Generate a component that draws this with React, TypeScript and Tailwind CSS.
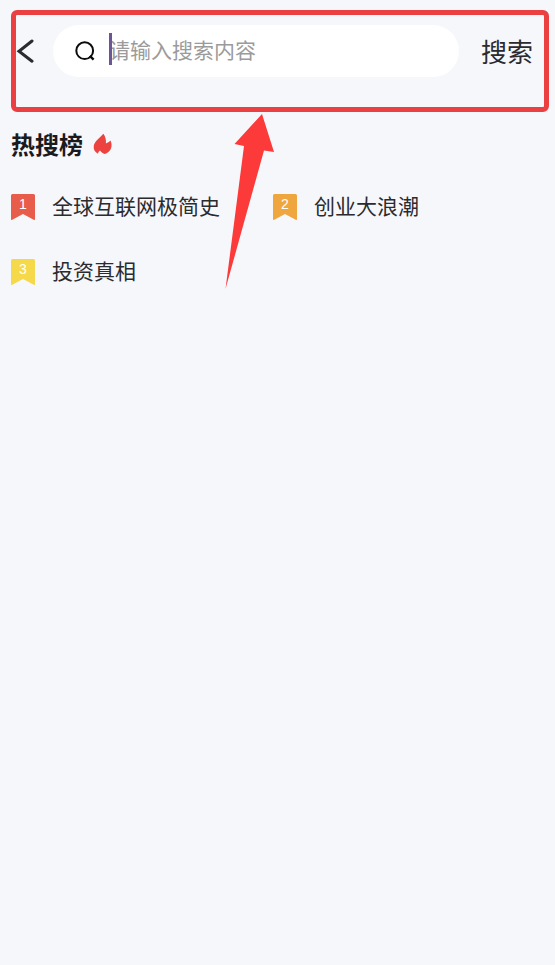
import { FormEvent, useState } from 'react'
import clsx from 'clsx'

type HotItem = {
  rank: number
  title: string
  color: string
}

const hotItems: HotItem[] = [
  { rank: 1, title: '全球互联网极简史', color: 'text-[#e75c4a]' },
  { rank: 2, title: '创业大浪潮', color: 'text-[#f0a63e]' },
  { rank: 3, title: '投资真相', color: 'text-[#f6d94a]' },
]

const BackIcon = () => (
  <svg width="18" height="26" viewBox="0 0 18 26" fill="none" aria-hidden>
    <path
      d="M16 3 3 13.200l13 10"
      stroke="#2b2b2f"
      strokeWidth="3"
      strokeLinecap="round"
    />
  </svg>
)

const SearchIcon = () => (
  <svg width="20" height="20" viewBox="0 0 20 20" fill="none" aria-hidden>
    <circle cx="9.7" cy="9.7" r="8.400" stroke="#0b0b0b" strokeWidth="2" />
    <path d="m14.800 14.800 3.800 3.800" stroke="#0b0b0b" strokeWidth="2.400" />
  </svg>
)

const FlameIcon = () => (
  <svg width="19" height="22" viewBox="0 0 19 22" aria-hidden>
    <path
      d="M10.400.8C7.500 4.300 1.200 8.200.7 13.600c-.2 3 1.200 5.600 4.300 7.200.1-1.300.8-2.400 2-3.400 1.400 1.800 2.900 3.100 4.800 3.600 3.700-1.200 6.400-4.200 6.700-7.700.2-2.400-.2-4.200-1.100-5.700-1.200 1.300-2.600 2.100-4.500 2.800.4-3.300-.4-6.700-2.500-9.600Z"
      fill="#ec4240"
    />
  </svg>
)

const RankBadge = ({ rank, color }: { rank: number; color: string }) => (
  <span className={clsx('relative h-7 w-6 shrink-0', color)}>
    <svg width="24" height="28" viewBox="0 0 24 28" aria-hidden>
      <path
        d="M1.500 1h21Q24 1 24 2.500v23.500q0 1.500-1.300.8L12 21 1.300 26.800Q0 27.500 0 26V2.500Q0 1 1.500 1Z"
        fill="currentColor"
      />
    </svg>
    <span className="absolute inset-x-0 top-[3px] text-center font-['Liberation_Sans'] text-sm leading-4 text-white">
      {rank}
    </span>
  </span>
)

const App = () => {
  const [keyword, setKeyword] = useState('')

  const onSubmitHandle = (e: FormEvent<HTMLFormElement>) => {
    e.preventDefault()
  }

  return (
    <main className="relative min-h-screen bg-[#f6f7fb] font-['Noto_Sans_CJK_SC',sans-serif] text-[#2b2b2f]">
      <header className="relative pt-[25px] pr-[22px] pb-[35px] pl-4">
        <form onSubmit={onSubmitHandle} className="flex items-center">
          <button type="button" aria-label="返回" className="w-[37px]">
            <BackIcon />
          </button>
          <label className="flex h-[52px] min-w-0 flex-1 items-center rounded-full bg-white pr-6 pl-[22px]">
            <SearchIcon />
            <span className="relative ml-[14px] flex min-w-0 flex-1 pb-1">
              {keyword === '' && (
                <span className="absolute top-0 bottom-1 left-0 w-[3px] bg-[#6a5696]" />
              )}
              <input
                type="text"
                aria-label="搜索内容"
                placeholder="请输入搜索内容"
                value={keyword}
                onChange={(e) => setKeyword(e.target.value)}
                className="h-8 w-full bg-transparent text-[21px] outline-none placeholder:text-[#9b9b9b]"
              />
            </span>
          </label>
          <button type="submit" className="ml-[22px] text-[26px] leading-8">
            搜索
          </button>
        </form>
        <div className="pointer-events-none absolute top-[10px] right-[6px] bottom-0 left-[11px] rounded-md border-5 border-[#ea4041]" />
      </header>

      <section className="pr-5 pl-[11px]">
        <h1 className="mt-4 flex items-center gap-[10px] text-2xl leading-8 font-bold text-[#1b1b1e]">
          热搜榜
          <FlameIcon />
        </h1>
        <ul className="mt-[31px] grid grid-cols-2 gap-y-[33px]">
          {hotItems.map((item) => (
            <li key={item.rank}>
              <a href="#" className="flex items-center gap-[17px]">
                <RankBadge rank={item.rank} color={item.color} />
                <span className="pb-1 text-[21px] leading-7">{item.title}</span>
              </a>
            </li>
          ))}
        </ul>
      </section>

      {/* pointer from the list up to the search bar */}
      <svg
        className="pointer-events-none absolute top-[113px] left-[224px]"
        width="52"
        height="178"
        viewBox="0 0 52 178"
        aria-hidden
      >
        <path
          d="M38 1 10.500 31l9.500 2L1.500 176 40 37.500l10 1.500Z"
          fill="#fb3a39"
        />
      </svg>
    </main>
  )
}

export default App
